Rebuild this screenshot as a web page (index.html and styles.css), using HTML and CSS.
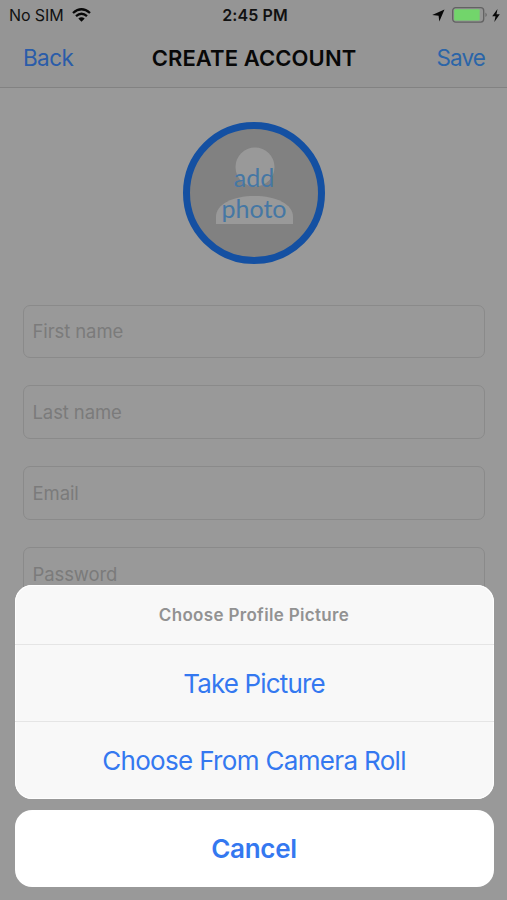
FILE: index.html
```html
<!DOCTYPE html>
<html lang="en">
<head>
<meta charset="utf-8">
<title>Create Account</title>
<link rel="stylesheet" href="styles.css">
</head>
<body>
<div class="screen">
  <header class="top">
    <div class="status">
      <div class="carrier"><span class="sim">No SIM</span>
        <svg class="wifi" width="19" height="14" viewBox="0 0 19 14"><g fill="none" stroke="#080808" stroke-width="2.3"><path d="M1 5Q9.500-2.600 18 5"/><path d="M4 8.200Q9.500 3.400 15 8.200"/></g><path d="M6.300 10.500Q9.500 7.900 12.700 10.500L9.500 13.800Z" fill="#080808"/></svg>
      </div>
      <span class="time">2:45 PM</span>
      <div class="power">
        <svg class="arrow" width="13" height="13" viewBox="0 0 13 13"><path d="M12.500.4L7.300 12.600 6.600 6.800.2 6.100Z" fill="#080808"/></svg>
        <svg class="battery" width="37" height="16" viewBox="0 0 37 16"><rect x=".7" y=".7" width="31" height="14.400" rx="3" fill="none" stroke="#626262" stroke-width="1.300"/><rect x="2.200" y="2.200" width="25.500" height="11.400" rx="1" fill="#72d56b"/><path d="M33.500 5.500Q36 7.800 33.500 10Z" fill="#626262"/></svg>
        <svg class="bolt" width="8" height="13" viewBox="0 0 8 13"><path d="M5.500 0L.2 7.200H3.500L2.300 13 7.800 5.300H4.500Z" fill="#080808"/></svg>
      </div>
    </div>
    <nav class="nav">
      <a class="back">Back</a>
      <h1 class="title">CREATE ACCOUNT</h1>
      <a class="save">Save</a>
    </nav>
  </header>
  <main class="form">
    <div class="avatar">
      <svg class="person" width="78" height="78" viewBox="0 0 78 78"><circle cx="39" cy="20" r="19.500"/><path d="M0 77V70C0 57 17 49 38.500 49S77 57 77 70V77Z"/></svg>
      <span class="avatar-text">add<br>photo</span>
    </div>
    <div class="fields">
      <div class="field"><span>First name</span></div>
      <div class="field"><span>Last name</span></div>
      <div class="field"><span>Email</span></div>
      <div class="field"><span>Password</span></div>
    </div>
  </main>
  <section class="sheet">
    <div class="group">
      <div class="heading"><span>Choose Profile Picture</span></div>
      <div class="action"><span class="take">Take Picture</span></div>
      <div class="action"><span class="choose">Choose From Camera Roll</span></div>
    </div>
    <div class="cancel"><span>Cancel</span></div>
  </section>
</div>
</body>
</html>
```
FILE: styles.css
```css
* { box-sizing: border-box; }
body { margin: 0; font-family: Inter, "Liberation Sans", sans-serif; }
.screen { position: relative; width: 507px; height: 900px; overflow: hidden; background: #999; }
.top { height: 88px; background: #959595; border-bottom: 1px solid #828282; }
.status { height: 30px; display: grid; grid-template-columns: 1fr auto 1fr; align-items: center; padding: 0 7px 0 9px; color: #111; }
.carrier { display: flex; align-items: center; gap: 8px; font-size: 16px; }
.sim { letter-spacing: -.1px; }
.time { font-size: 16px; font-weight: 600; letter-spacing: .1px; margin-left: 1px; }
.power { display: flex; align-items: center; justify-content: flex-end; }
.arrow { margin-right: 7px; }
.bolt { margin-left: 3px; }
.nav { height: 55px; padding: 0 22px 0 23px; display: grid; grid-template-columns: 1fr auto 1fr; align-items: center; font-size: 22.5px; line-height: 30px; letter-spacing: -.6px; color: #2a5ca9; }
.save { text-align: right; color: #2b65a8; letter-spacing: -.9px; }
.title { margin: 0; color: #080808; font-size: 22px; font-weight: 600; letter-spacing: .1px; }
.form { padding: 34px 22px 0; }
.avatar { position: relative; width: 142px; height: 142px; margin: 0 auto 40.5px 161px; border: 7px solid #1450a2; border-radius: 50%; background: #818181; display: flex; justify-content: center; padding: 18px 0 0 1px; }
.person { flex: none; fill: #999; }
.avatar-text { position: absolute; top: 33px; left: 0; width: 128px; text-align: center; font: 25px/31px Lato, sans-serif; color: #4577a4; }
.fields { display: grid; gap: 27px; padding-left: .5px; }
.field { height: 53.8px; border: 1px solid #8a8a8a; border-radius: 7px; padding: 0 9px; display: flex; align-items: center; font-size: 18.5px; letter-spacing: -.1px; color: #7b7b7b; }
.sheet { position: absolute; left: 14.5px; bottom: 13.5px; width: 479px; display: grid; gap: 11px; text-align: center; color: #3478f0; }
.group { height: 214px; border-radius: 17px; background: #f8f8f8; overflow: hidden; box-shadow: inset 0 0 0 1px #fff; }
.heading { height: 59px; padding-top: 2px; display: flex; align-items: center; justify-content: center; color: #929292; font-size: 17px; font-weight: 600; letter-spacing: .33px; }
.action { height: 77.5px; border-top: 1px solid #e5e5e5; padding-top: 1px; display: flex; align-items: center; justify-content: center; font-size: 26px; }
.take { letter-spacing: -.85px; }
.choose { letter-spacing: -.67px; }
.cancel { height: 77px; border-radius: 17px; background: #fff; padding-top: 1px; display: flex; align-items: center; justify-content: center; font-size: 26px; font-weight: 600; letter-spacing: -.3px; }
```
